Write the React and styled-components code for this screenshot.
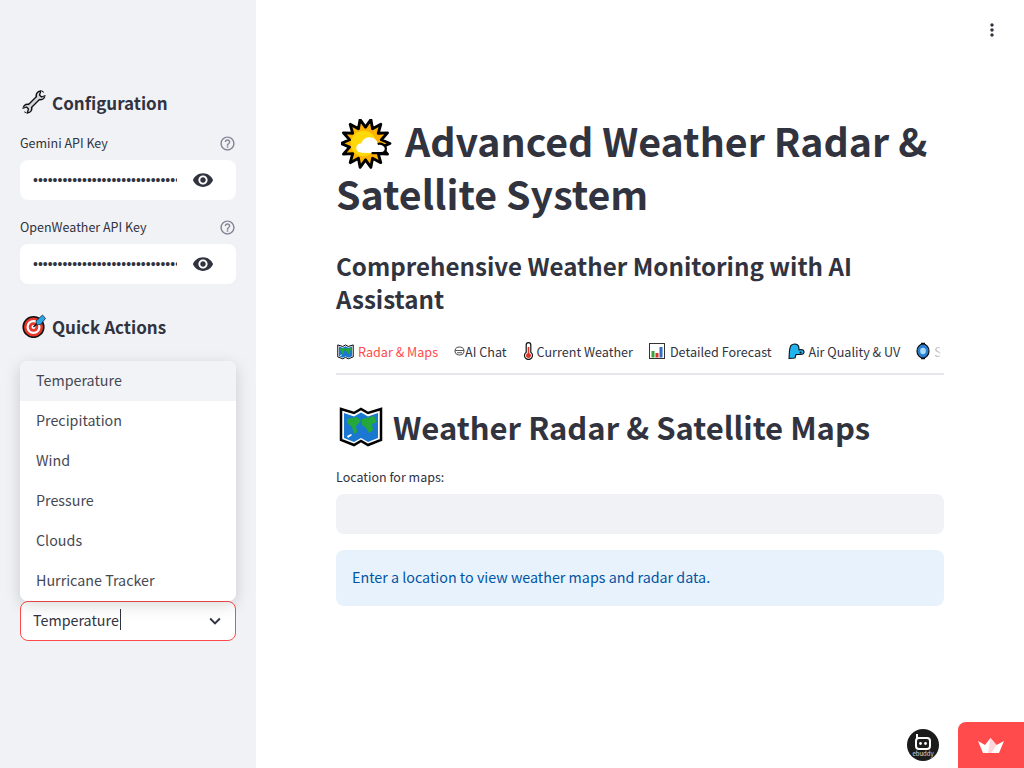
import React from 'react';
import styled, { createGlobalStyle } from 'styled-components';
import { MdVisibility, MdHelpOutline, MdExpandMore, MdMoreVert } from 'react-icons/md';

const FONT = '"Noto Sans CJK SC", "Noto Sans", sans-serif';

const GlobalStyle = createGlobalStyle`
  html, body {
    margin: 0;
    padding: 0;
    height: 100%;
    background: #fff;
    overflow: hidden;
  }
  body {
    font-family: ${FONT};
    color: #31333f;
  }
  * {
    box-sizing: border-box;
  }
`;

const WrenchIcon = ({ size = 24 }) => (
  <svg width={size} height={size} viewBox="0 0 24 24">
    <path d="M6 18L18 6" stroke="#111" strokeWidth="5.500" />
    <circle cx="18.500" cy="5.500" r="5" fill="#111" />
    <circle cx="5.500" cy="18.500" r="5" fill="#111" />
    <circle cx="18.500" cy="5.500" r="3.500" fill="#d5d7db" />
    <circle cx="5.500" cy="18.500" r="3.500" fill="#d5d7db" />
    <path d="M6 18L18 6" stroke="#d5d7db" strokeWidth="2.800" />
    <path d="M19 5l5-5v6.500h-1.500L20.500 6.500zM5 19l-5 5v-6.500h1.500L3.500 17.500z" fill="#f0f2f6" />
    <path d="M23.500 5.500l-4 1.500-2-2 1.500-4.500M.5 18.500l4-1.500 2 2L5 23.500" fill="#f0f2f6" stroke="#111" strokeWidth="1.300" strokeLinejoin="round" />
  </svg>
);

const TargetIcon = ({ size = 24 }) => (
  <svg width={size} height={size} viewBox="0 0 24 24">
    <circle cx="11.500" cy="13" r="10.300" fill="#e8372c" stroke="#111" strokeWidth="1.600" />
    <circle cx="11.500" cy="13" r="7" fill="#fff" />
    <circle cx="11.500" cy="13" r="4.800" fill="#e8372c" />
    <circle cx="11.500" cy="13" r="2" fill="#fff" />
    <path d="M11.500 13L20 4.500" stroke="#111" strokeWidth="1.500" />
    <path d="M14 7L20.500 1l3 3.500-5 6-4 .5z" fill="#2aa5e8" stroke="#111" strokeWidth=".7" />
  </svg>
);

const SunCloudIcon = ({ size = 51 }) => {
  const rays = [];
  for (let i = 0; i < 28; i++) {
    const r = i % 2 ? 16 : 24;
    const a = (i * Math.PI) / 14;
    rays.push(`${(24 + r * Math.cos(a)).toFixed(1)},${(24 + r * Math.sin(a)).toFixed(1)}`);
  }
  return (
    <svg width={size} height={size} viewBox="0 0 50 50">
      <polygon points={rays.join(' ')} fill="#ffb300" stroke="#000" strokeWidth="2.800" strokeLinejoin="round" />
      <circle cx="22" cy="24" r="12.500" fill="#ffd80a" />
      <path d="M20 33c-3 0-5-2-5-4.500s2-4.500 5-4.500c1-3.500 4-6 8-6 4.500 0 7.500 3 8 6.500 4-1 8 1.500 8 4.500s-2 4.500-4.500 4.500z" fill="#fff" />
      <path d="M36 24.500c4-1 8 1.500 8 4.500s-2 4.500-4.500 4.500H30" fill="none" stroke="#000" strokeWidth="2.200" />
    </svg>
  );
};

const MapIcon = ({ size = 44 }) => (
  <svg width={size} height={size} viewBox="0 0 44 44">
    <path d="M2 5l13 4 7-4 7 4 13-4v31l-13 5-7-4-7 4-13-5z" fill="#fff" stroke="#000" strokeWidth="2.500" strokeLinejoin="miter" />
    <path d="M5 9l10 3.500 7-4 7 4 10-3.500v25l-10 4-7-4-7 4-10-4z" fill="#1a78d0" />
    <path d="M8 15l10-2 4 4-5 5 1 6-3 2-2-7-5-4zM23 15l12-3 3 6-5 2 1 6-4 3-3-5-4-3z" fill="#25a83a" />
    <path d="M8 32l4-2 1 1-4 3z" fill="#fff" />
  </svg>
);

const ThermometerIcon = () => (
  <svg width="11" height="18" viewBox="0 0 11 18">
    <path d="M3.200 3a2.300 2.300 0 0 1 4.600 0v7.200a4 4 0 1 1-4.600 0z" fill="#fff" stroke="#111" strokeWidth="1.200" />
    <path d="M4.700 5h1.600v6.200a2.500 2.500 0 1 1-1.600 0z" fill="#d9332a" />
  </svg>
);

const ChatGlyph = () => (
  <svg width="11" height="10" viewBox="0 0 11 10">
    <ellipse cx="5.500" cy="5" rx="4.500" ry="4" fill="none" stroke="#555" strokeWidth="1.100" />
    <path d="M1 4.500h9M3 6.800h5" stroke="#555" strokeWidth="1.100" />
  </svg>
);

const ChartIcon = () => (
  <svg width="16" height="16" viewBox="0 0 16 16">
    <rect x=".5" y=".5" width="15" height="15" fill="#fff" stroke="#333" />
    <rect x="2.500" y="8" width="3" height="6.500" fill="#3aa335" />
    <rect x="6.500" y="10" width="3" height="4.500" fill="#d9332a" />
    <rect x="10.500" y="4" width="3" height="10.500" fill="#2f6fc4" />
  </svg>
);

const WindFaceIcon = () => (
  <svg width="17" height="17" viewBox="0 0 17 17">
    <path d="M1 15.500C1.500 10 1 5 3 2.500 5 .5 9 .5 10.500 3c.5 1.500.5 3 .5 4l2-.5c1.500 0 3 1 3 2.500s-1.500 2.500-3.500 2.500H8l-1 3.500z" fill="#22b4ee" stroke="#111" strokeWidth="1.100" strokeLinejoin="round" />
    <circle cx="12.500" cy="9.500" r="1" fill="#111" />
  </svg>
);

const HurricaneIcon = () => (
  <svg width="14" height="18" viewBox="0 0 14 18">
    <ellipse cx="7" cy="9" rx="6" ry="7" fill="#2a7fd4" stroke="#111" strokeWidth="1.200" />
    <ellipse cx="7" cy="9" rx="2.800" ry="3.200" fill="#a9dcf5" />
    <path d="M5 1.500h4M5 16.500h4" stroke="#111" strokeWidth="1.300" />
  </svg>
);

const CrownIcon = () => (
  <svg width="26" height="15" viewBox="0 0 26 15">
    <path d="M0 3l7 4 5.500-7 6 7 7.500-4-5 12H5z" fill="#fff" />
    <path d="M12.500 0l6 7-5 8H10z" fill="#ffd6da" />
  </svg>
);

const BuddyIcon = () => (
  <svg width="18" height="18" viewBox="0 0 18 18">
    <path d="M3 1v5" stroke="#fff" strokeWidth="2" />
    <rect x="2" y="5" width="14" height="11" rx="3" fill="none" stroke="#fff" strokeWidth="2" />
    <circle cx="6.500" cy="10.500" r="1.400" fill="#fff" />
    <circle cx="11.500" cy="10.500" r="1.400" fill="#fff" />
  </svg>
);

const options = ['Temperature', 'Precipitation', 'Wind', 'Pressure', 'Clouds', 'Hurricane Tracker'];

const tabs = [
  { label: 'Radar & Maps', icon: <MapIcon size={17} />, active: true, gap: 4 },
  { label: 'AI Chat', icon: <ChatGlyph />, gap: 0 },
  { label: 'Current Weather', icon: <ThermometerIcon />, gap: 3 },
  { label: 'Detailed Forecast', icon: <ChartIcon />, gap: 5 },
  { label: 'Air Quality & UV', icon: <WindFaceIcon />, gap: 4 },
  { label: 'Satellite', icon: <HurricaneIcon />, gap: 4 },
];

function KeyField({ label }) {
  return (
    <Field>
      <FieldHead>
        <FieldLabel>{label}</FieldLabel>
        <MdHelpOutline size={17} color="#808495" />
      </FieldHead>
      <KeyBox>
        <KeyInput type="password" readOnly value={'x'.repeat(60)} />
        <MdVisibility size={22} color="#31333f" />
      </KeyBox>
    </Field>
  );
}

export default function App() {
  return (
    <Page>
      <GlobalStyle />
      <Sidebar>
        <SideTitle>
          <WrenchIcon />
          Configuration
        </SideTitle>
        <KeyField label="Gemini API Key" />
        <KeyField label="OpenWeather API Key" />
        <SideTitle $spaced>
          <TargetIcon />
          Quick Actions
        </SideTitle>
        <SelectWrap>
          <Menu>
            {options.map((o, i) => (
              <MenuItem key={o} $active={i === 0}>{o}</MenuItem>
            ))}
          </Menu>
          <Select>
            <SelectValue>Temperature</SelectValue>
            <MdExpandMore size={22} color="#31333f" />
          </Select>
        </SelectWrap>
      </Sidebar>

      <Main>
        <MenuButton>
          <MdMoreVert size={20} color="#31333f" />
        </MenuButton>
        <Content>
          <Title>
            <TitleEmoji><SunCloudIcon /></TitleEmoji> Advanced Weather Radar &amp; Satellite System
          </Title>
          <Subtitle>Comprehensive Weather Monitoring with AI Assistant</Subtitle>
          <TabBar>
            {tabs.map((t) => (
              <Tab key={t.label} $active={t.active} $gap={t.gap}>
                {t.icon}
                {t.label}
              </Tab>
            ))}
            <TabFade />
          </TabBar>
          <SectionTitle>
            <MapIcon />
            Weather Radar &amp; Satellite Maps
          </SectionTitle>
          <MapLabel>Location for maps:</MapLabel>
          <LocationBox />
          <InfoBox>Enter a location to view weather maps and radar data.</InfoBox>
        </Content>
      </Main>

      <BuddyBadge>
        <BuddyIcon />
        <BuddyText>ebuddy</BuddyText>
      </BuddyBadge>
      <HostBadge>
        <CrownIcon />
      </HostBadge>
    </Page>
  );
}

const Page = styled.div`
  display: flex;
  width: 1024px;
  height: 768px;
  position: relative;
  overflow: hidden;
`;

const Sidebar = styled.aside`
  flex: 0 0 256px;
  width: 256px;
  min-width: 0;
  background: #f0f2f6;
  padding: 86px 20px 0;
  display: flex;
  flex-direction: column;
`;

const SideTitle = styled.h3`
  margin: ${(p) => (p.$spaced ? '12px' : '0')} 0 12px;
  padding-left: 2px;
  display: flex;
  align-items: center;
  gap: 6px;
  height: 32px;
  font-size: 17px;
  font-weight: 600;
  color: #31333f;
`;

const Field = styled.div`
  margin-bottom: 14px;
`;

const FieldHead = styled.div`
  display: flex;
  justify-content: space-between;
  align-items: center;
  height: 24px;
  margin-bottom: 6px;
  svg {
    margin-top: 2px;
  }
`;

const FieldLabel = styled.label`
  font-size: 12.5px;
  color: #31333f;
`;

const KeyBox = styled.div`
  display: flex;
  align-items: center;
  height: 40px;
  background: #fff;
  border-radius: 8px;
  padding: 0 22px 0 13px;
`;

const KeyInput = styled.input`
  flex: 1;
  width: 0;
  min-width: 0;
  margin-right: 15px;
  padding: 0;
  border: 0;
  outline: 0;
  background: transparent;
  font-family: "Liberation Sans", sans-serif;
  font-size: 14px;
  color: #31333f;
`;

const SelectWrap = styled.div`
  position: relative;
  margin-top: 247px;
`;

const Menu = styled.ul`
  position: absolute;
  left: 0;
  right: 0;
  bottom: 40px;
  margin: 0;
  padding: 0;
  list-style: none;
  background: #fff;
  border-radius: 8px;
  overflow: hidden;
  box-shadow: 0 4px 16px rgba(0, 0, 0, 0.16);
`;

const MenuItem = styled.li`
  height: 40px;
  display: flex;
  align-items: center;
  padding: 0 16px 4px;
  font-size: 14.3px;
  color: #31333f;
  opacity: 0.9;
  background: ${(p) => (p.$active ? '#f0f2f6' : '#fff')};
`;

const Select = styled.div`
  display: flex;
  align-items: center;
  justify-content: space-between;
  height: 40px;
  background: #fff;
  border: 1px solid #ff4b4b;
  border-radius: 8px;
  padding: 0 9px 0 12px;
`;

const SelectValue = styled.span`
  font-size: 14.3px;
  color: #31333f;
  border-right: 1px solid #31333f;
  padding-right: 1px;
  margin: 0 auto 4px 0;
`;

const Main = styled.main`
  flex: 1;
  min-width: 0;
  position: relative;
  padding: 113px 80px 0;
`;

const MenuButton = styled.div`
  position: absolute;
  top: 20px;
  right: 22px;
  display: flex;
`;

const Content = styled.div`
  width: 608px;
`;

const Title = styled.h1`
  margin: 0 0 30px;
  font-size: 39.35px;
  line-height: 53px;
  font-weight: 700;
  color: #31333f;
`;

const TitleEmoji = styled.span`
  display: inline-block;
  width: 60px;
  height: 30px;
  padding-left: 5px;
  vertical-align: -2px;
  svg {
    display: block;
    margin-top: -10px;
  }
`;

const Subtitle = styled.h2`
  margin: 0 0 16px;
  font-size: 24.15px;
  line-height: 33px;
  font-weight: 600;
  color: #31333f;
`;

const TabBar = styled.div`
  position: relative;
  display: flex;
  gap: 16px;
  height: 44px;
  overflow: hidden;
  border-bottom: 2px solid #e6e6ea;
`;

const Tab = styled.div`
  flex: none;
  display: flex;
  align-items: center;
  gap: ${(p) => p.$gap}px;
  height: 44px;
  padding: 0 0 2px ${(p) => (p.$active ? '1px' : '0')};
  font-size: 12.6px;
  color: ${(p) => (p.$active ? '#ff4b4b' : '#31333f')};
  border-bottom: 2px solid ${(p) => (p.$active ? '#ff4b4b' : 'transparent')};
`;

const TabFade = styled.div`
  position: absolute;
  top: 0;
  right: 0;
  bottom: 0;
  width: 11px;
  background: linear-gradient(to right, rgba(255, 255, 255, 0.55), rgba(255, 255, 255, 0.8) 60%, #fff 70%);
`;

const SectionTitle = styled.h2`
  margin: 25px 0 14px;
  display: flex;
  align-items: center;
  gap: 10px;
  height: 52px;
  padding-left: 3px;
  font-size: 31px;
  font-weight: 600;
  color: #31333f;
`;

const MapLabel = styled.label`
  display: block;
  font-size: 12.5px;
  line-height: 22px;
  margin-bottom: 6px;
  color: #31333f;
`;

const LocationBox = styled.div`
  height: 40px;
  background: #f0f2f6;
  border-radius: 8px;
`;

const InfoBox = styled.div`
  margin-top: 16px;
  height: 56px;
  padding: 0 16px 4px;
  display: flex;
  align-items: center;
  background: #e8f2fc;
  border-radius: 8px;
  font-size: 14.3px;
  color: #0054a3;
`;

const BuddyBadge = styled.div`
  position: absolute;
  left: 907px;
  top: 729px;
  width: 32px;
  height: 32px;
  border-radius: 50%;
  background: #1c1c1c;
  display: flex;
  flex-direction: column;
  align-items: center;
  padding-top: 4px;
`;

const BuddyText = styled.span`
  font-size: 6px;
  line-height: 6px;
  color: #ddd;
`;

const HostBadge = styled.div`
  position: absolute;
  right: 0;
  bottom: 0;
  width: 66px;
  height: 46px;
  background: #ff4b4b;
  border-top-left-radius: 8px;
  display: flex;
  align-items: center;
  justify-content: center;
`;
